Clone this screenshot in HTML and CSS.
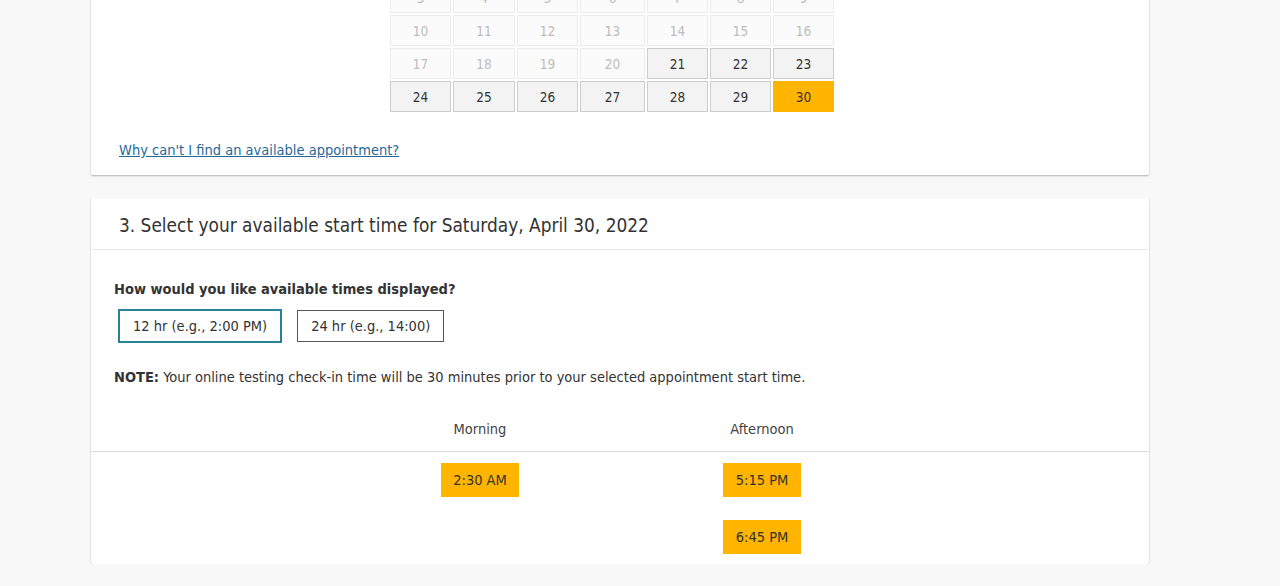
FILE: index.html
```html
<!DOCTYPE html>
<html lang="en">
<head>
<meta charset="utf-8">
<title>Select appointment</title>
<link rel="stylesheet" href="styles.css">
</head>
<body>
<main class="page">
  <section class="card card-calendar">
    <div class="calendar">
      <div class="day off">3</div><div class="day off">4</div><div class="day off">5</div><div class="day off">6</div><div class="day off">7</div><div class="day off">8</div><div class="day off">9</div>
      <div class="day off">10</div><div class="day off">11</div><div class="day off">12</div><div class="day off">13</div><div class="day off">14</div><div class="day off">15</div><div class="day off">16</div>
      <div class="day off">17</div><div class="day off">18</div><div class="day off">19</div><div class="day off">20</div><div class="day">21</div><div class="day">22</div><div class="day">23</div>
      <div class="day">24</div><div class="day">25</div><div class="day">26</div><div class="day">27</div><div class="day">28</div><div class="day">29</div><div class="day selected">30</div>
    </div>
    <a class="help-link" href="#">Why can't I find an available appointment?</a>
  </section>

  <section class="card card-times">
    <h2 class="card-title">3. Select your available start time for Saturday, April 30, 2022</h2>
    <div class="card-body">
      <p class="question">How would you like available times displayed?</p>
      <div class="format-row">
        <button class="fmt active">12 hr (e.g., 2:00 PM)</button>
        <button class="fmt">24 hr (e.g., 14:00)</button>
      </div>
      <p class="note"><strong>NOTE:</strong> Your online testing check-in time will be 30 minutes prior to your selected appointment start time.</p>
    </div>
    <div class="times">
      <div class="times-head">
        <span></span>
        <span class="period">Morning</span>
        <span class="period">Afternoon</span>
        <span></span>
      </div>
      <div class="times-body">
        <span></span>
        <div class="slot-col">
          <button class="slot">2:30 AM</button>
        </div>
        <div class="slot-col">
          <button class="slot">5:15 PM</button>
          <button class="slot">6:45 PM</button>
        </div>
        <span></span>
      </div>
    </div>
  </section>
</main>
</body>
</html>
```

FILE: styles.css
```css
* { box-sizing: border-box; }

html, body {
  margin: 0;
  padding: 0;
  background: #f8f8f8;
}

body {
  font-family: Tahoma, "DejaVu Sans Condensed", "DejaVu Sans", sans-serif;
  color: #333;
  font-size: 14.5px;
}

.page {
  width: 1058px;
  margin-left: 91px;
}

.card {
  background: #fff;
  border-radius: 2px;
  box-shadow: 0 1px 2px rgba(0, 0, 0, 0.28);
}

.card-calendar {
  margin-top: -30px;
  padding: 12px 0 15px 0;
}

.calendar {
  display: grid;
  grid-template-columns: 61px 62px 61px 65px 61px 61px 61px;
  grid-auto-rows: 31px;
  gap: 2px;
  width: 444px;
  margin-left: 299px;
}

.day {
  display: flex;
  align-items: center;
  justify-content: center;
  font-size: 13.5px;
  color: #333;
  background: #f3f3f3;
  border: 1px solid #cdcdcd;
}

.day.off {
  color: #bdbdbd;
  background: #fbfbfb;
  border-color: #ebebeb;
}

.day.selected {
  background: #ffb400;
  border-color: #ffb400;
  color: #333;
}

.help-link {
  display: block;
  margin: 28px 0 0 28px;
  line-height: 20px;
  color: #27689a;
  text-decoration: underline;
  font-size: 14.5px;
}

.card-times {
  margin-top: 23px;
}

.card-title {
  margin: 0;
  height: 52px;
  display: flex;
  align-items: center;
  padding: 2px 28px 0 28px;
  font-size: 18.9px;
  font-weight: normal;
  color: #333;
  border-bottom: 1px solid #e6e6e6;
}

.card-body {
  padding: 29px 23px 0 23px;
}

.question {
  margin: 0;
  font-weight: bold;
  line-height: 20px;
  font-size: 14.5px;
}

.format-row {
  display: flex;
  align-items: center;
  gap: 15px;
  margin: 10px 0 0 4px;
  height: 34px;
}

.fmt {
  font-family: inherit;
  font-size: 14.5px;
  color: #333;
  background: #fff;
  height: 32px;
  padding: 0 13px;
  border: 1px solid #555;
  border-radius: 0;
}

.fmt.active {
  height: 34px;
  padding: 0 13px;
  border: 2px solid #2a8296;
}

.note {
  margin: 24px 0 0 0;
  line-height: 20px;
  font-size: 14.5px;
}

.times {
  margin-top: 23px;
}

.times-head,
.times-body {
  display: grid;
  grid-template-columns: 248px 282px 282px 1fr;
}

.times-head {
  height: 42px;
  align-items: center;
  padding-bottom: 3px;
  border-bottom: 1px solid #dcdcdc;
}

.period {
  text-align: center;
  color: #444;
  font-size: 14.5px;
}

.times-body {
  padding: 11px 0 10px 0;
}

.slot-col {
  display: flex;
  flex-direction: column;
  align-items: center;
  gap: 23px;
}

.slot {
  font-family: inherit;
  font-size: 14.5px;
  color: #333;
  background: #ffb400;
  border: none;
  border-radius: 0;
  height: 34px;
  width: 78px;
  padding: 0;
}
```
